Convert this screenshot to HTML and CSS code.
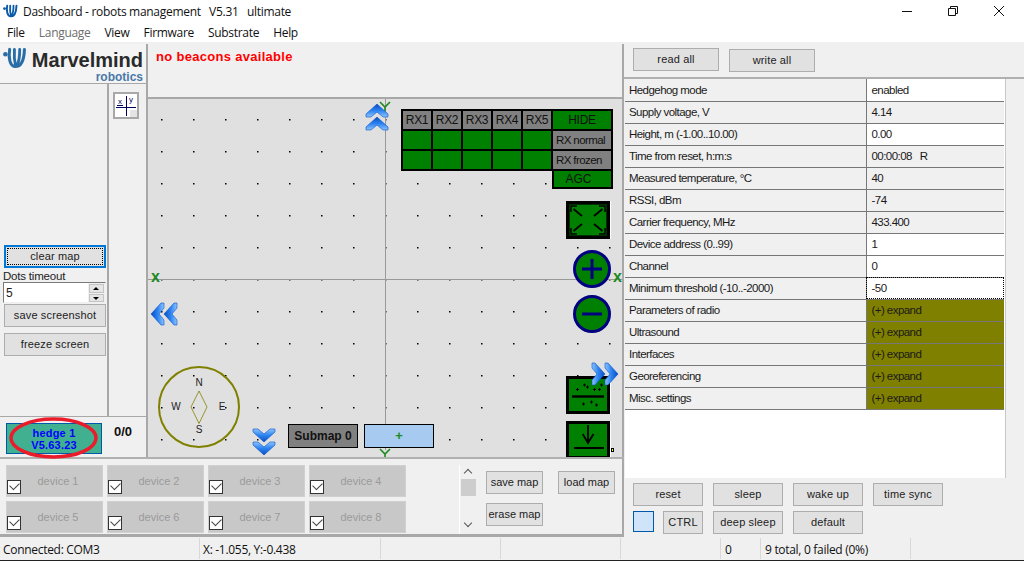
FILE: index.html
```html
<!DOCTYPE html>
<html lang="en">
<head>
    <meta charset="UTF-8">
    <title>Dashboard - robots management</title>
    <link rel="stylesheet" href="styles.css">
</head>
<body>
    <svg class="defs" width="0" height="0">
        <defs>
            <linearGradient id="chev" x1="0" y1="0" x2="0" y2="1">
                <stop offset="0" stop-color="#8cc4ff"/>
                <stop offset="0.5" stop-color="#2a82f0"/>
                <stop offset="1" stop-color="#0a4cc0"/>
            </linearGradient>
            <symbol id="dbl-chevron" viewBox="0 0 24 28">
                <path d="M1 1 L6 1 L12 6 L18 1 L23 1 L23 4 L12 14 L1 4 Z" fill="url(#chev)" stroke="#0a50c8" stroke-width="0.6"/>
                <path d="M1 14 L6 14 L12 19 L18 14 L23 14 L23 17 L12 27 L1 17 Z" fill="url(#chev)" stroke="#0a50c8" stroke-width="0.6"/>
            </symbol>
            <symbol id="mm-logo" viewBox="0 0 25 22">
                <circle cx="2.5" cy="7" r="2.400" fill="currentColor"/>
                <path d="M7 2 C5.500 10 7 20 13 20 C19 20 22 15 22.500 2" fill="none" stroke="currentColor" stroke-width="3.200" stroke-linecap="round"/>
                <path d="M12 2 C11.500 9 12 14 13 18 M17.500 2 C17.500 9 17 14 15 18" fill="none" stroke="currentColor" stroke-width="3" stroke-linecap="round"/>
            </symbol>
        </defs>
    </svg>

    <header class="titlebar">
        <svg class="title-icon"><use href="#mm-logo"/></svg>
        <span class="title-text">Dashboard - robots management &nbsp; V5.31 &nbsp; ultimate</span>
        <div class="win-btns">
            <svg width="12" height="12" viewBox="0 0 12 12"><path d="M1 6.500 H11" stroke="#111" fill="none"/></svg>
            <svg width="12" height="12" viewBox="0 0 12 12"><path d="M1.500 3.500 H8.500 V10.500 H1.500 Z M3.500 3.500 V1.500 H10.500 V8.500 H8.500" stroke="#111" fill="none"/></svg>
            <svg width="12" height="12" viewBox="0 0 12 12"><path d="M1 1 L11 11 M11 1 L1 11" stroke="#111" fill="none"/></svg>
        </div>
    </header>

    <nav class="menubar">
        <span>File</span>
        <span class="menu-off">Language</span>
        <span>View</span>
        <span>Firmware</span>
        <span>Substrate</span>
        <span>Help</span>
    </nav>

    <main class="main">
        <section class="left">
            <div class="left-top">
                <aside class="sidebar">
                    <div class="logo">
                        <div class="logo-row">
                            <svg class="logo-icon"><use href="#mm-logo"/></svg>
                            <span class="logo-name">Marvelmind</span>
                        </div>
                        <div class="logo-sub">robotics</div>
                    </div>
                    <div class="side-body">
                        <div class="side-main">
                            <button class="btn btn-focus">clear map</button>
                            <label class="dots-label">Dots timeout</label>
                            <div class="spin">
                                <span class="spin-value">5</span>
                                <div class="spin-btns">
                                    <span class="spin-up"></span>
                                    <span class="spin-down"></span>
                                </div>
                            </div>
                            <button class="btn btn-side">save screenshot</button>
                            <button class="btn btn-side btn-freeze">freeze screen</button>
                        </div>
                        <div class="side-tools">
                            <div class="xy-btn">
                                <svg width="22" height="23" viewBox="0 0 22 23">
                                    <rect width="22" height="23" fill="#fff"/>
                                    <rect x="15" y="16" width="7" height="7" fill="#e4e4e4"/>
                                    <path d="M1 13.500 H21 M11.500 2 V22 M2 11.500 H8" stroke="#000060" stroke-width="1" fill="none"/>
                                    <text x="3" y="10" class="xy-text">x</text>
                                    <text x="14" y="8" class="xy-text">y</text>
                                </svg>
                            </div>
                        </div>
                    </div>
                    <div class="hedge-row">
                        <div class="hedge">
                            <span>hedge 1</span>
                            <span>V5.63.23</span>
                            <svg class="hedge-ring" viewBox="0 0 98 42"><ellipse cx="49.500" cy="21" rx="42.500" ry="19" fill="none" stroke="#ea1c2c" stroke-width="3.500"/></svg>
                        </div>
                        <div class="hedge-count">0/0</div>
                    </div>
                </aside>

                <section class="map">
                    <div class="map-strip">no beacons available</div>
                    <div class="canvas">
                        <svg class="grid" width="474" height="360">
                            <defs>
                                <pattern id="dots" x="13" y="20" width="32" height="32" patternUnits="userSpaceOnUse">
                                    <rect width="1.500" height="1.500" fill="#000"/>
                                </pattern>
                            </defs>
                            <rect width="474" height="360" fill="url(#dots)"/>
                            <path d="M237.500 0 V351 M0 180.500 H474" stroke="#999" fill="none"/>
                        </svg>

                        <span class="axis axis-x1">x</span>
                        <span class="axis axis-x2">x</span>
                        <svg class="axis-y axis-y1" viewBox="0 0 12 10"><path d="M1 1 L6 6 L11 1 M6 6 V10" stroke="#1c8a20" stroke-width="1.600" fill="none"/></svg>
                        <svg class="axis-y axis-y2" viewBox="0 0 12 10"><path d="M1 1 L6 6 L11 1 M6 6 V10" stroke="#1c8a20" stroke-width="1.600" fill="none"/></svg>

                        <div class="rx-table">
                            <div class="rx rx-head">RX1</div>
                            <div class="rx rx-head">RX2</div>
                            <div class="rx rx-head">RX3</div>
                            <div class="rx rx-head">RX4</div>
                            <div class="rx rx-head">RX5</div>
                            <div class="rx rx-on">HIDE</div>
                            <div class="rx rx-on"></div>
                            <div class="rx rx-on"></div>
                            <div class="rx rx-on"></div>
                            <div class="rx rx-on"></div>
                            <div class="rx rx-on"></div>
                            <div class="rx rx-head rx-label">RX normal</div>
                            <div class="rx rx-on"></div>
                            <div class="rx rx-on"></div>
                            <div class="rx rx-on"></div>
                            <div class="rx rx-on"></div>
                            <div class="rx rx-on"></div>
                            <div class="rx rx-head rx-label">RX frozen</div>
                        </div>
                        <div class="agc">AGC</div>

                        <div class="tool tool-fit">
                            <svg width="38" height="32" viewBox="0 0 38 32">
                                <rect x="0.500" y="0.500" width="37" height="31" fill="none" stroke="#003000"/>
                                <path d="M2 8 V2 H8 M30 2 H36 V8 M2 24 V30 H8 M36 24 V30 H30" stroke="#000" stroke-width="1.500" fill="none"/>
                                <path d="M4.500 5 L13 12 M33.500 5 L25 12 M4.500 27 L13 20 M33.500 27 L25 20" stroke="#000" stroke-width="1.800" fill="none"/>
                            </svg>
                        </div>

                        <svg class="zoom-btn zoom-plus" viewBox="0 0 38 38">
                            <circle cx="19" cy="19" r="17.500" fill="#008000" stroke="#000080" stroke-width="3"/>
                            <path d="M9 19 H29 M19 9 V29" stroke="#000080" stroke-width="3" fill="none"/>
                        </svg>
                        <svg class="zoom-btn zoom-minus" viewBox="0 0 38 38">
                            <circle cx="19" cy="19" r="17.500" fill="#008000" stroke="#000080" stroke-width="3"/>
                            <path d="M9 19 H29" stroke="#000080" stroke-width="3" fill="none"/>
                        </svg>

                        <div class="tool tool-dots">
                            <svg width="38" height="32" viewBox="0 0 38 32">
                                <path d="M3 17.500 H35" stroke="#000" stroke-width="2.400" fill="none"/>
                                <path d="M7 10.500 h3 M8.500 9 v3 M14 6 h3 M15.500 4.500 v3 M17 8 h3 M18.500 6.500 v3 M24 10.500 h3 M25.500 9 v3 M29 10.500 h3 M30.500 9 v3 M31 6 h3 M32.500 4.500 v3 M13 25 h3 M14.500 23.500 v3 M21 23 h3 M22.500 21.500 v3 M26 26 h3 M27.500 24.500 v3" stroke="#000" stroke-width="1" fill="none"/>
                            </svg>
                        </div>
                        <div class="tool tool-down">
                            <svg width="38" height="32" viewBox="0 0 38 32">
                                <path d="M19 1 V18.500 M13.700 10 L19 19 L24.500 10" stroke="#000" stroke-width="1.800" fill="none"/>
                                <path d="M5 24 H35" stroke="#000" stroke-width="2" fill="none"/>
                            </svg>
                        </div>
                        <span class="corner-mark"></span>

                        <svg class="chev chev-up"><use href="#dbl-chevron"/></svg>
                        <svg class="chev chev-left"><use href="#dbl-chevron"/></svg>
                        <svg class="chev chev-right"><use href="#dbl-chevron"/></svg>
                        <svg class="chev chev-down"><use href="#dbl-chevron"/></svg>

                        <div class="compass">
                            <svg width="84" height="84" viewBox="0 0 84 84">
                                <circle cx="42" cy="42" r="40" fill="none" stroke="#808000" stroke-width="2"/>
                                <path d="M42 26 L50 42 L42 58.500 L34 42 Z" fill="none" stroke="#808000" stroke-width="0.800"/>
                                <text x="42" y="21" class="cmp">N</text>
                                <text x="42" y="68" class="cmp">S</text>
                                <text x="19" y="45" class="cmp">W</text>
                                <text x="65" y="45" class="cmp">E</text>
                            </svg>
                        </div>

                        <div class="submap">Submap 0</div>
                        <div class="submap-add">+</div>
                    </div>
                </section>
            </div>

            <div class="devices">
                <div class="device-grid">
                    <div class="device"><span class="check"></span>device 1</div>
                    <div class="device"><span class="check"></span>device 2</div>
                    <div class="device"><span class="check"></span>device 3</div>
                    <div class="device"><span class="check"></span>device 4</div>
                    <div class="device"><span class="check"></span>device 5</div>
                    <div class="device"><span class="check"></span>device 6</div>
                    <div class="device"><span class="check"></span>device 7</div>
                    <div class="device"><span class="check"></span>device 8</div>
                </div>
                <div class="dev-scroll">
                    <span class="sc-up"></span>
                    <span class="sc-thumb"></span>
                    <span class="sc-down"></span>
                </div>
                <div class="map-btns">
                    <button class="btn btn-map">save map</button>
                    <button class="btn btn-map">load map</button>
                    <button class="btn btn-map">erase map</button>
                </div>
            </div>
        </section>

        <section class="right">
            <div class="right-top">
                <button class="btn btn-top">read all</button>
                <button class="btn btn-top btn-low">write all</button>
            </div>
            <div class="table-wrap">
                <table class="params">
                    <tr><td>Hedgehog mode</td><td class="edit">enabled</td></tr>
                    <tr><td>Supply voltage, V</td><td>4.14</td></tr>
                    <tr><td>Height, m (-1.00..10.00)</td><td class="edit">0.00</td></tr>
                    <tr><td>Time from reset, h:m:s</td><td>00:00:08 &nbsp; R</td></tr>
                    <tr><td>Measured temperature, °C</td><td>40</td></tr>
                    <tr><td>RSSI, dBm</td><td>-74</td></tr>
                    <tr><td>Carrier frequency, MHz</td><td>433.400</td></tr>
                    <tr><td>Device address (0..99)</td><td class="edit">1</td></tr>
                    <tr><td>Channel</td><td class="edit">0</td></tr>
                    <tr><td>Minimum threshold (-10..-2000)</td><td class="edit focus">-50</td></tr>
                    <tr><td>Parameters of radio</td><td class="expand">(+) expand</td></tr>
                    <tr><td>Ultrasound</td><td class="expand">(+) expand</td></tr>
                    <tr><td>Interfaces</td><td class="expand">(+) expand</td></tr>
                    <tr><td>Georeferencing</td><td class="expand">(+) expand</td></tr>
                    <tr><td>Misc. settings</td><td class="expand">(+) expand</td></tr>
                </table>
            </div>
            <div class="right-bottom">
                <button class="btn btn-act">reset</button>
                <button class="btn btn-act">sleep</button>
                <button class="btn btn-act">wake up</button>
                <button class="btn btn-act">time sync</button>
                <div class="ctrl-cell">
                    <span class="swatch"></span>
                    <button class="btn btn-ctrl">CTRL</button>
                </div>
                <button class="btn btn-act">deep sleep</button>
                <button class="btn btn-act">default</button>
            </div>
        </section>
    </main>

    <footer class="statusbar">
        <div class="st st-conn">Connected: COM3</div>
        <div class="st st-pos">X: -1.055, Y:-0.438</div>
        <div class="st st-120"></div>
        <div class="st st-120"></div>
        <div class="st st-100"></div>
        <div class="st st-zero">0</div>
        <div class="st st-total">9 total, 0 failed (0%)</div>
        <div class="st st-end"></div>
    </footer>
</body>
</html>
```

FILE: styles.css
```css
* {
    box-sizing: border-box;
}
html, body {
    margin: 0;
    padding: 0;
}
body {
    width: 1024px;
    height: 561px;
    overflow: hidden;
    background: #f0f0f0;
    font-family: "Liberation Sans", Arial, sans-serif;
    font-size: 11px;
    color: #222;
    display: flex;
    flex-direction: column;
}
.defs {
    position: absolute;
}

/* title + menu */
.titlebar {
    height: 22px;
    background: #fff;
    display: flex;
    align-items: center;
    padding-left: 3px;
    font-family: "Open Sans", "Noto Sans", sans-serif;
    font-size: 12px;
    letter-spacing: -0.3px;
    color: #111;
    flex: none;
}
.title-icon {
    width: 15px;
    height: 14px;
    color: #0a5aa8;
    margin-right: 5px;
}
.win-btns {
    margin-left: auto;
    display: flex;
    gap: 34px;
    padding-right: 19px;
    align-items: center;
}
.menubar {
    height: 20px;
    background: #fff;
    display: flex;
    gap: 14px;
    align-items: center;
    padding-left: 7px;
    font-family: "Open Sans", "Noto Sans", sans-serif;
    font-size: 12px;
    letter-spacing: -0.3px;
    color: #111;
    flex: none;
}
.menu-off {
    color: #6d6d6d;
}

.main {
    height: 496px;
    display: flex;
    flex: none;
    padding-top: 2px;
}

/* buttons */
.btn {
    font-family: "Liberation Sans", Arial, sans-serif;
    font-size: 11px;
    letter-spacing: 0.15px;
    color: #222;
    background: #e1e1e1;
    border: 1.5px solid #adadad;
    padding: 0 0 2px;
    margin: 0;
    display: block;
}
.btn-focus {
    width: 102px;
    height: 23px;
    margin: 0 0 0 4px;
    border: 2px solid #0078d7;
    outline: 1px dotted #000;
    outline-offset: -4px;
}
.btn-side {
    width: 102px;
    height: 23px;
    margin: 1px 0 0 4px;
}
.btn-freeze {
    margin-top: 6px;
}

/* sidebar */
.left {
    width: 624px;
    flex: none;
}
.left-top {
    display: flex;
    height: 415px;
    border-bottom: 2px solid #b0b0b0;
}
.sidebar {
    width: 148px;
    flex: none;
    border-right: 2px solid #a8a8a8;
    display: flex;
    flex-direction: column;
}
.logo {
    height: 40px;
    background: #f4f4f4;
    border-bottom: 1px solid #a8a8a8;
    padding: 0 3px;
    flex: none;
}
.logo-row {
    display: flex;
    align-items: center;
    height: 32px;
}
.logo-icon {
    width: 25px;
    height: 22px;
    color: #2a6ea8;
    margin: -4px 5px 0 0;
}
.logo-name {
    font-weight: bold;
    font-size: 20px;
    color: #2a2a2a;
}
.logo-sub {
    text-align: right;
    font-weight: bold;
    font-size: 12px;
    color: #4a78a8;
    line-height: 11px;
    margin-top: -4px;
}
.side-body {
    display: flex;
    height: 333px;
    border-bottom: 1px solid #a8a8a8;
    flex: none;
}
.side-main {
    width: 109px;
    padding-top: 161px;
    border-right: 2px solid #a8a8a8;
    flex: none;
}
.dots-label {
    display: block;
    margin: 2px 0 0 3px;
    height: 12px;
    line-height: 13px;
    font-size: 11.500px;
    letter-spacing: -0.2px;
}
.spin {
    height: 21px;
    width: 103px;
    margin-left: 3px;
    display: flex;
    background: #fff;
    border: 1px solid #7a7a7a;
    border-right-color: #f0f0f0;
    border-bottom-color: #f0f0f0;
}
.spin-value {
    flex: 1;
    padding: 3px 0 0 2px;
    font-size: 12px;
}
.spin-btns {
    width: 17px;
    background: #f0f0f0;
    display: flex;
    flex-direction: column;
    gap: 1px;
    padding: 1px 0 0 1px;
}
.spin-up, .spin-down {
    flex: 1;
    background: #e5e5e5;
    border: 1px solid #c4c4c4;
    position: relative;
    width: 15px;
}
.spin-up::after, .spin-down::after {
    content: "";
    position: absolute;
    left: 3px;
    top: 2px;
    border-left: 3px solid transparent;
    border-right: 3px solid transparent;
}
.spin-up::after {
    border-bottom: 3px solid #000;
}
.spin-down::after {
    border-top: 3px solid #000;
}
.side-tools {
    flex: 1;
    padding: 8px 0 0 4px;
}
.xy-btn {
    width: 26px;
    height: 27px;
    border: 2px solid #a8a8a8;
    background: #fff;
}
.xy-btn svg {
    display: block;
}
.xy-text {
    font-size: 8px;
    fill: #000060;
    font-family: "Liberation Sans", sans-serif;
}
.hedge-row {
    flex: 1;
    display: flex;
    padding: 6px 0 0 6px;
    min-height: 0;
}
.hedge {
    position: relative;
    width: 96px;
    height: 31px;
    background: #40b090;
    border: 1px solid #0058a8;
    color: #0000ff;
    font-weight: bold;
    font-size: 11px;
    letter-spacing: 0.2px;
    display: flex;
    flex-direction: column;
    align-items: center;
    justify-content: center;
    line-height: 12px;
}
.hedge-ring {
    position: absolute;
    left: -3px;
    top: -7px;
    width: 98px;
    height: 42px;
}
.hedge-count {
    font-weight: bold;
    font-size: 13px;
    margin: 1px 0 0 12px;
    color: #111;
}

/* map */
.map {
    flex: 1;
    border-right: 2px solid #a8a8a8;
    display: flex;
    flex-direction: column;
    min-width: 0;
}
.map-strip {
    height: 55px;
    border-bottom: 2px solid #a8a8a8;
    color: #ff0000;
    font-weight: bold;
    font-size: 13px;
    letter-spacing: 0.3px;
    padding: 5px 0 0 8px;
    flex: none;
}
.canvas {
    position: relative;
    flex: 1;
    background: #e0e0e0;
    overflow: hidden;
}
.grid {
    position: absolute;
    left: 0;
    top: 0;
}
.axis {
    position: absolute;
    color: #1c8a20;
    font-weight: bold;
    font-size: 16px;
    line-height: 12px;
}
.axis-x1 {
    left: 3px;
    top: 172px;
}
.axis-x2 {
    left: 465px;
    top: 172px;
}
.axis-y {
    position: absolute;
    width: 12px;
    height: 10px;
}
.axis-y1 {
    left: 231px;
    top: 2px;
}
.axis-y2 {
    left: 231px;
    top: 349px;
}
.chev {
    position: absolute;
    width: 24px;
    height: 28px;
}
.chev-up {
    left: 217px;
    top: 4px;
    transform: rotate(180deg);
}
.chev-left {
    left: 4px;
    top: 201px;
    transform: rotate(90deg);
}
.chev-right {
    left: 445px;
    top: 261px;
    transform: rotate(-90deg);
}
.chev-down {
    left: 104px;
    top: 329px;
}

.rx-table {
    position: absolute;
    left: 253px;
    top: 10px;
    width: 212px;
    height: 62px;
    background: #000;
    padding: 2px;
    display: grid;
    grid-template-columns: repeat(5, 28px) 58px;
    grid-auto-rows: 18px;
    gap: 2px;
}
.rx {
    text-align: center;
    line-height: 19px;
    font-size: 12px;
    letter-spacing: -0.3px;
    color: #111;
    white-space: nowrap;
}
.rx-head {
    background: #808080;
}
.rx-on {
    background: #008000;
}
.rx-label {
    text-align: left;
    padding-left: 3px;
    font-size: 11.500px;
    letter-spacing: -0.6px;
}
.agc {
    position: absolute;
    left: 404px;
    top: 72px;
    width: 61px;
    height: 18px;
    background: #008000;
    border: 2px solid #000;
    border-top-width: 0;
    padding-right: 8px;
    text-align: center;
    line-height: 17px;
    font-size: 12px;
    color: #111;
}
.tool {
    position: absolute;
    left: 418px;
    width: 44px;
    height: 38px;
    background: #008000;
    border: 3px solid #000;
    box-shadow: 1px 0 0 #fff;
}
.tool svg {
    display: block;
}
.tool-fit {
    top: 102px;
}
.tool-dots {
    top: 277px;
}
.tool-down {
    top: 322px;
}
.corner-mark {
    position: absolute;
    left: 463px;
    top: 349px;
    width: 3px;
    height: 4px;
    background: #ffff00;
    border: 1px solid #000;
}
.zoom-btn {
    position: absolute;
    left: 425px;
    width: 38px;
    height: 38px;
}
.zoom-plus {
    top: 151px;
}
.zoom-minus {
    top: 196px;
}
.compass {
    position: absolute;
    left: 9px;
    top: 266px;
    width: 84px;
    height: 84px;
}
.cmp {
    font-size: 10px;
    text-anchor: middle;
    fill: #222;
    font-family: "Liberation Sans", sans-serif;
}
.submap {
    position: absolute;
    left: 140px;
    top: 325px;
    width: 70px;
    height: 24px;
    background: #808080;
    border: 1px solid #000;
    font-weight: bold;
    font-size: 12px;
    line-height: 22px;
    text-align: center;
    color: #111;
}
.submap-add {
    position: absolute;
    left: 216px;
    top: 325px;
    width: 70px;
    height: 24px;
    background: #a6caf0;
    border: 1px solid #000;
    font-weight: bold;
    font-size: 13px;
    line-height: 22px;
    text-align: center;
    color: #1c8a20;
}

/* device strip */
.devices {
    height: 78px;
    border-right: 2px solid #a8a8a8;
    border-bottom: 3px solid #a8a8a8;
    display: flex;
    padding-top: 6px;
}
.device-grid {
    width: 460px;
    padding-left: 6px;
    display: grid;
    grid-template-columns: repeat(4, 97px);
    grid-auto-rows: 32px;
    gap: 4px;
    flex: none;
    border-right: 1px solid #fff;
}
.device {
    position: relative;
    background: #c8c8c8;
    border: 1px solid #d0d0d0;
    color: #9a9a9a;
    text-align: center;
    line-height: 30px;
    padding-left: 7px;
    font-size: 11px;
}
.check {
    position: absolute;
    left: 0;
    top: 14px;
    width: 14px;
    height: 14px;
    background: #fff;
    border: 1px solid #333;
}
.check::after {
    content: "";
    position: absolute;
    left: 2px;
    top: 1px;
    width: 8px;
    height: 5px;
    border-left: 1.500px solid #444;
    border-bottom: 1.500px solid #444;
    transform: rotate(-45deg);
}
.dev-scroll {
    width: 17px;
    display: flex;
    flex-direction: column;
    align-items: center;
    position: relative;
    flex: none;
}
.sc-thumb {
    width: 15px;
    height: 17px;
    background: #cdcdcd;
    margin-top: 14px;
}
.sc-up, .sc-down {
    position: absolute;
    left: 5px;
    width: 6px;
    height: 6px;
    border-left: 1.500px solid #555;
    border-top: 1.500px solid #555;
    transform: rotate(45deg);
}
.sc-up {
    top: 5px;
}
.sc-down {
    top: 55px;
    transform: rotate(225deg);
}
.map-btns {
    margin-left: 9px;
    padding-top: 0;
    margin-top: 6px;
    display: grid;
    grid-template-columns: 57px 57px;
    grid-auto-rows: 23px;
    column-gap: 15px;
    row-gap: 9px;
    align-content: start;
}
.btn-map {
    width: 57px;
    height: 23px;
    letter-spacing: 0;
}

/* right panel */
.right {
    flex: 1;
    display: flex;
    flex-direction: column;
}
.right-top {
    height: 35px;
    display: flex;
    gap: 10px;
    padding: 4px 0 0 9px;
    border-bottom: 2px solid #b0b0b0;
    flex: none;
}
.btn-top {
    width: 86px;
    height: 23px;
}
.btn-low {
    margin-top: 1px;
}
.table-wrap {
    height: 399px;
    width: 381px;
    margin-left: 1px;
    background: #fff;
    border-right: 1px solid #c8c8c8;
    flex: none;
}
.params {
    border-collapse: collapse;
    table-layout: fixed;
    width: 379px;
    font-size: 11.500px;
    letter-spacing: -0.55px;
    color: #1a1a1a;
}
.params td {
    height: 22px;
    padding: 0 0 0 4px;
    border-bottom: 1px solid #777;
    background: #f0f0f0;
    white-space: nowrap;
}
.params td:first-child {
    width: 241px;
    border-right: 1px solid #777;
}
.params td:last-child {
    padding-left: 5px;
}
.params td.edit {
    background: #fff;
}
.params td.expand {
    background: #808000;
}
.params td.focus {
    outline: 1px dotted #000;
    outline-offset: -1px;
}
.right-bottom {
    padding: 5px 0 0 9px;
    display: grid;
    grid-template-columns: repeat(4, 70px);
    grid-auto-rows: 23px;
    gap: 5px 10px;
}
.btn-act {
    width: 70px;
    height: 23px;
}
.ctrl-cell {
    display: flex;
    justify-content: space-between;
}
.swatch {
    width: 21px;
    height: 21px;
    background: #cfe4f8;
    border: 1px solid #0058a8;
}
.btn-ctrl {
    width: 40px;
    height: 23px;
}

/* status bar */
.statusbar {
    height: 23px;
    display: flex;
    border-bottom: 1px solid #222;
    font-family: "Open Sans", "Noto Sans", sans-serif;
    font-size: 12px;
    letter-spacing: -0.3px;
    color: #111;
    flex: none;
}
.st {
    padding: 3px 0 0 3px;
    border-right: 1px solid #d8d8d8;
    white-space: nowrap;
    height: 21px;
}
.st-conn {
    width: 200px;
}
.st-pos {
    width: 181px;
}
.st-120 {
    width: 120px;
}
.st-100 {
    width: 100px;
}
.st-zero {
    width: 40px;
    padding-left: 4px;
}
.st-total {
    width: 150px;
    padding-left: 4px;
}
.st-end {
    flex: 1;
    border-right: 0;
}
```
